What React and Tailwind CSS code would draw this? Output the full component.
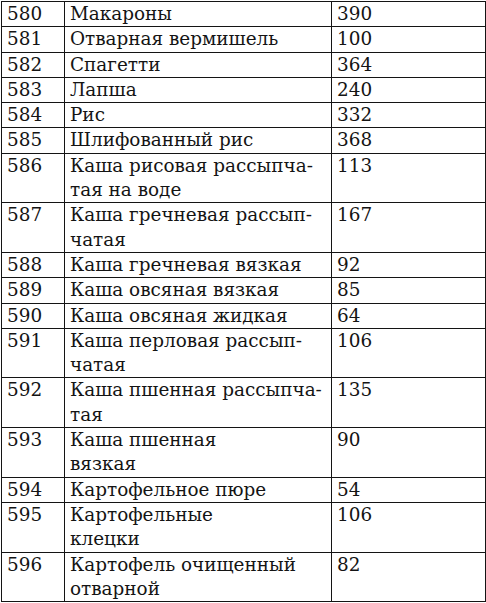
import React from 'react';

// rows of the food table: number, name (lines), value
const rows = [
  ['580', ['Макароны'], '390'],
  ['581', ['Отварная вермишель'], '100'],
  ['582', ['Спагетти'], '364'],
  ['583', ['Лапша'], '240'],
  ['584', ['Рис'], '332'],
  ['585', ['Шлифованный рис'], '368'],
  ['586', ['Каша рисовая рассыпча-', 'тая на воде'], '113'],
  ['587', ['Каша гречневая рассып-', 'чатая'], '167'],
  ['588', ['Каша гречневая вязкая'], '92'],
  ['589', ['Каша овсяная вязкая'], '85'],
  ['590', ['Каша овсяная жидкая'], '64'],
  ['591', ['Каша перловая рассып-', 'чатая'], '106'],
  ['592', ['Каша пшенная рассыпча-', 'тая'], '135'],
  ['593', ['Каша пшенная', 'вязкая'], '90'],
  ['594', ['Картофельное пюре'], '54'],
  ['595', ['Картофельные', 'клецки'], '106'],
  ['596', ['Картофель очищенный', 'отварной'], '82'],
];

const App = () => {
  return (
    <div className="w-[486px] h-[603px] bg-white overflow-hidden pt-px pl-px">
      <table className="w-[484px] border-collapse table-fixed font-['DejaVu_Serif',serif] text-[18.4px] leading-[24.3px] text-[#141414]">
        <colgroup>
          <col className="w-[63px]" />
          <col className="w-[267px]" />
          <col className="w-[154px]" />
        </colgroup>
        <tbody>
          {rows.map(([num, name, value]) => (
            <tr key={num}>
              <td className="border border-[#141414] align-top p-0 px-[5px]">{num}</td>
              <td className="border border-[#141414] align-top p-0 px-[5px] whitespace-nowrap">
                {name.map((line, i) => (
                  <div key={i}>{line}</div>
                ))}
              </td>
              <td className="border border-[#141414] align-top p-0 px-[5px]">{value}</td>
            </tr>
          ))}
        </tbody>
      </table>
    </div>
  );
};

export default App;
